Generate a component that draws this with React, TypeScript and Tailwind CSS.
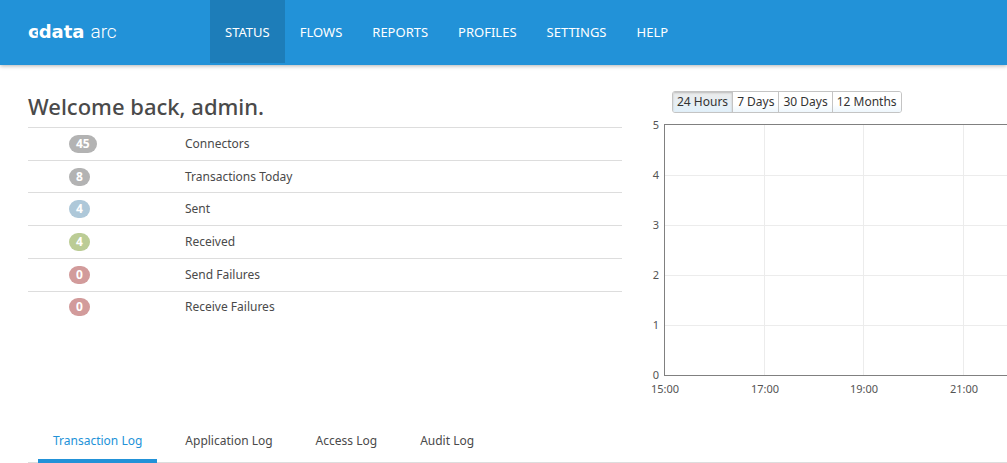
import React, { useState } from "react";

const navItems = ["STATUS", "FLOWS", "REPORTS", "PROFILES", "SETTINGS", "HELP"];

const stats = [
  { count: 45, label: "Connectors", color: "bg-[#b3b3b3]" },
  { count: 8, label: "Transactions Today", color: "bg-[#b3b3b3]" },
  { count: 4, label: "Sent", color: "bg-[#aec8d9]" },
  { count: 4, label: "Received", color: "bg-[#bbcc95]" },
  { count: 0, label: "Send Failures", color: "bg-[#d29b9b]" },
  { count: 0, label: "Receive Failures", color: "bg-[#d29b9b]" },
];

const ranges = ["24 Hours", "7 Days", "30 Days", "12 Months"];
const logs = ["Transaction Log", "Application Log", "Access Log", "Audit Log"];

const yTicks = [5, 4, 3, 2, 1, 0];
const xTicks = [
  { x: 18, label: "15:00" },
  { x: 118, label: "17:00" },
  { x: 217, label: "19:00" },
  { x: 317, label: "21:00" },
];

const Header = () => {
  return (
    <header className="relative flex h-[65px] items-start bg-[#2292d8] px-7 text-white shadow-[0_1px_4px_rgba(0,0,0,0.3)]">
      <a href="#home" className="flex h-[63px] w-[182px] items-center gap-[6px]">
        <span className="relative font-[family-name:'DejaVu_Sans',sans-serif] text-[18px] leading-5 font-bold">
          cdata
          {/* arrow that opens the c */}
          <svg
            className="absolute top-[7px] left-[5px]"
            width="6"
            height="8"
            viewBox="0 0 6 8"
            fill="currentColor"
          >
            <path d="M1 4 L5 1.5 V6.5 Z" />
          </svg>
        </span>
        <span className="font-[family-name:Roboto,sans-serif] text-[19px] leading-5 font-light">
          arc
        </span>
      </a>
      <nav className="flex">
        {navItems.map((item) => (
          <a
            key={item}
            href={"#" + item.toLowerCase()}
            className={
              "flex h-[63px] items-center px-[15px] text-[13px] " +
              (item === "STATUS" ? "bg-[#1d7db9]" : "")
            }
          >
            {item}
          </a>
        ))}
      </nav>
    </header>
  );
};

const Summary = () => {
  return (
    <section className="pt-7">
      <h1 className="pb-2 text-[22px] leading-[26px] font-medium">
        Welcome back, admin.
      </h1>
      <table className="h-[196px] w-full text-left">
        <tbody>
          {stats.map((stat) => (
            <tr key={stat.label} className="border-t border-[#dddddd]">
              <td className="w-[157px] pl-[41px]">
                <span
                  className={
                    "inline-block rounded-full px-[7px] text-[12px] leading-[18px] font-bold text-white " +
                    stat.color
                  }
                >
                  {stat.count}
                </span>
              </td>
              <td>{stat.label}</td>
            </tr>
          ))}
        </tbody>
      </table>
    </section>
  );
};

const Chart = () => {
  return (
    <svg
      className="h-[289px] w-full"
      fill="#545454"
      fontSize="11"
      shapeRendering="crispEdges"
    >
      {yTicks.slice(1, 5).map((tick) => (
        <line key={tick} x1="18" x2="100%" y1={262.5 - tick * 50} y2={262.5 - tick * 50} stroke="#ececec" />
      ))}
      {xTicks.slice(1).map((tick) => (
        <line key={tick.label} x1={tick.x + 0.5} x2={tick.x + 0.5} y1="12" y2="262" stroke="#ececec" />
      ))}
      <line x1="18" x2="100%" y1="11.5" y2="11.5" stroke="#808080" />
      <line x1="18" x2="100%" y1="262.5" y2="262.5" stroke="#808080" />
      <line x1="18.5" x2="18.5" y1="11" y2="263" stroke="#808080" />
      {yTicks.map((tick) => (
        <text key={tick} x="13" y={266 - tick * 50} textAnchor="end">
          {tick}
        </text>
      ))}
      {xTicks.map((tick) => (
        <text key={tick.label} x={tick.x + 1} y="280" textAnchor="middle">
          {tick.label}
        </text>
      ))}
    </svg>
  );
};

const Activity = () => {
  const [range, setRange] = useState("24 Hours");

  return (
    <section className="min-w-0 pt-[26px] pl-6">
      <div className="ml-[26px] flex h-[22px] w-fit divide-x divide-[#c4c4c4] overflow-hidden rounded-[3px] border border-[#c4c4c4]">
        {ranges.map((item) => (
          <button
            key={item}
            onClick={() => setRange(item)}
            className={
              "px-1 text-[12px] leading-5 whitespace-nowrap text-[#333333] " +
              (item === range
                ? "bg-linear-to-b from-[#ebebeb] to-[#e2f1fb] shadow-[inset_0_1px_2px_#bbbbbb]"
                : "bg-linear-to-b from-white from-60% to-[#eef7fd]")
            }
          >
            {item}
          </button>
        ))}
      </div>
      <Chart />
    </section>
  );
};

const LogTabs = () => {
  const [active, setActive] = useState("Transaction Log");

  return (
    <div className="mt-4 ml-7 flex gap-[13px] border-b border-[#dddddd] px-[10px]">
      {logs.map((log) => (
        <button
          key={log}
          onClick={() => setActive(log)}
          className={
            "-mb-px h-[45px] border-b-4 px-[15px] pt-1 whitespace-nowrap " +
            (log === active
              ? "border-[#2292d8] text-[#2292d8]"
              : "border-transparent")
          }
        >
          {log}
        </button>
      ))}
    </div>
  );
};

const App = () => {
  return (
    <div className="bg-white font-['Noto_Sans',sans-serif] text-[12px] leading-5 text-[#4a4a4a]">
      <Header />
      <main>
        <div className="grid grid-cols-[594fr_385fr] pl-7">
          <Summary />
          <Activity />
        </div>
        <LogTabs />
      </main>
    </div>
  );
};

export default App;
